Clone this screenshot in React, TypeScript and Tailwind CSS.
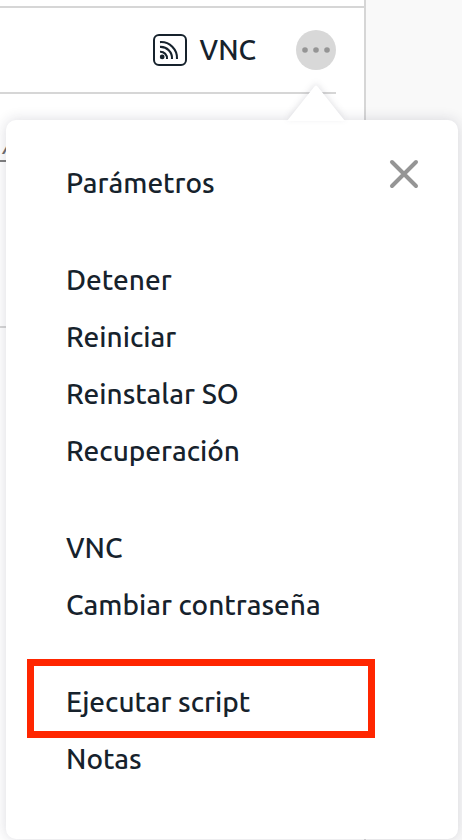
import { useState } from "react";

const menuGroups = [
  ["Parámetros"],
  ["Detener", "Reiniciar", "Reinstalar SO", "Recuperación"],
  ["VNC", "Cambiar contraseña"],
  ["Ejecutar script", "Notas"],
];

const highlighted = "Ejecutar script";

function VncIcon() {
  return (
    <svg width="34" height="32" viewBox="0 0 34 32" fill="none" stroke="#16222c" aria-hidden="true">
      <rect x="1" y="1" width="32" height="30" rx="5" strokeWidth="2" />
      <circle cx="9.2" cy="22.9" r="2.4" fill="#16222c" stroke="none" />
      <path d="M7 17.7A6.6 6.6 0 0 1 14 25" strokeWidth="2.1" />
      <path d="M7 12.9A11.3 11.3 0 0 1 19 25" strokeWidth="2.1" />
      <path d="M7 8.1A16 16 0 0 1 24 25" strokeWidth="2.1" />
    </svg>
  );
}

function DotsIcon() {
  return (
    <svg width="28" height="6" viewBox="0 0 28 6" fill="#959595" aria-hidden="true">
      <circle cx="3" cy="3" r="2.8" />
      <circle cx="14" cy="3" r="2.8" />
      <circle cx="25" cy="3" r="2.8" />
    </svg>
  );
}

function CloseIcon() {
  return (
    <svg width="30" height="30" viewBox="0 0 30 30" stroke="#959595" strokeWidth="4" strokeLinecap="round" aria-hidden="true">
      <path d="M3 3L27 27M27 3L3 27" />
    </svg>
  );
}

function ActionsMenu({ onClose }: { onClose: () => void }) {
  return (
    <div className="absolute top-[120px] left-1.5 right-1 rounded-[10px] bg-white shadow-[0_0_14px_rgba(30,30,60,0.16)]">
      {/* Arrow pointing at the dots button */}
      <svg
        className="absolute -top-[35px] right-[113px] drop-shadow-[0_-2px_3px_rgba(30,30,60,0.12)]"
        width="58"
        height="36"
        viewBox="0 0 58 36"
        fill="white"
        aria-hidden="true"
      >
        <path d="M0 36L27 2Q29 -1 31 2L58 36Z" />
      </svg>
      <button type="button" aria-label="Cerrar" onClick={onClose} className="absolute top-[39px] right-[39px]">
        <CloseIcon />
      </button>
      <nav className="flex flex-col gap-10 pt-[34px] pl-[60px] pr-[83px] pb-[52px]">
        {menuGroups.map((group) => (
          <ul key={group[0]}>
            {group.map((label) => (
              <li key={label} className="relative">
                <button type="button" className="block h-[57px] w-full text-left">
                  {label}
                </button>
                {label === highlighted && (
                  <span className="pointer-events-none absolute -top-3.5 -bottom-2 -left-[39px] right-0 border-7 border-[#ff2600]" />
                )}
              </li>
            ))}
          </ul>
        ))}
      </nav>
    </div>
  );
}

export default function App() {
  const [open, setOpen] = useState(true);

  return (
    <div className="relative flex min-h-screen overflow-hidden bg-[#f9f9f9] font-['Ubuntu','Noto_Sans',sans-serif] text-[28px] leading-9 font-medium text-[#16222c]">
      <main className="flex-1 border-r-2 border-[#d6d6d6] bg-white pt-1.5">
        <div className="border-t-2 border-[#d6d6d6] pr-7">
          <header className="flex h-[86px] items-center justify-end gap-10 border-b-2 border-[#d6d6d6]">
            <button type="button" className="flex items-center gap-[13px]">
              <VncIcon />
              VNC
            </button>
            <button
              type="button"
              aria-label="Más acciones"
              aria-expanded={open}
              onClick={() => setOpen(!open)}
              className="flex size-10 items-center justify-center rounded-full bg-[#d8d8d8]"
            >
              <DotsIcon />
            </button>
          </header>
          <div className="h-[234px] border-b-2 border-[#d6d6d6] pt-[34px] text-[#707070]">
            <a href="#" className="block w-10 border-b-2 border-[#808080] pl-[3px] leading-8 font-normal italic">
              A
            </a>
          </div>
        </div>
      </main>
      <aside className="w-24 shrink-0" />
      {open && <ActionsMenu onClose={() => setOpen(false)} />}
    </div>
  );
}
